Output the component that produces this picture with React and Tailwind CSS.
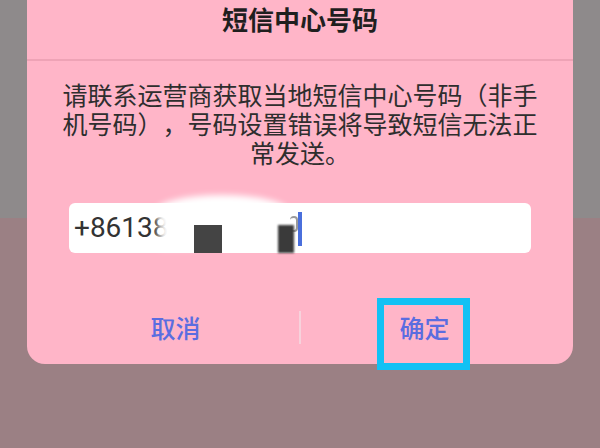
import React from "react";

const cjk = "font-['Noto_Sans_CJK_SC',sans-serif]";

const SmsCenterDialog = () => {
  return (
    <div className={`absolute left-[27px] top-0 w-[546px] h-[364px] rounded-b-[18px] bg-[#ffb5c8] flex flex-col ${cjk}`}>
      <div className="h-[61px] border-b-2 border-[#eea3b6] flex justify-center">
        <h1 className="pt-[2px] text-[26px] leading-[34px] font-semibold text-[#1f1f1f]">
          短信中心号码
        </h1>
      </div>

      <p className="pt-[19px] text-center text-[25px] leading-[29px] text-[#2e2e2e] [text-spacing-trim:space-all]">
        请联系运营商获取当地短信中心号码（非手
        <br />
        机号码），号码设置错误将导致短信无法正
        <br />
        常发送。
      </p>

      <div className="relative mt-[36px] mx-[42px] h-[50px] rounded-[6px] bg-white flex items-center">
        <span className="pl-[5px] text-[28px] text-[#333] font-['Roboto',sans-serif]">
          +86138
        </span>
        {/* blurred redaction over the rest of the number */}
        <div className="absolute left-[86px] top-[-8px] w-[134px] h-[34px] rounded-[50%] bg-white blur-[3px]" />
        <div className="absolute left-[90px] top-[8px] w-[40px] h-[36px] bg-white blur-[4px]" />
        <div className="absolute left-[125px] top-[22px] w-[28px] h-[28px] bg-[#444]" />
        <div className="absolute left-[221px] top-[13px] w-[8px] h-[16px] rounded-full border-2 border-l-0 border-[#9a9a9a]" />
        <div className="absolute left-[209px] top-[22px] w-[16px] h-[28px] bg-[#3a3a3a] blur-[1px]" />
        <div className="absolute left-[229px] top-[9px] w-[4px] h-[34px] bg-[#4a6fdc]" />
      </div>

      <div className="mt-auto mb-[19px] px-[25px] h-[36px] flex items-center">
        <button className="flex-1 text-[25px] leading-[36px] font-medium text-[#5a6de0]">取消</button>
        <div className="w-[2px] h-[33px] bg-[#f7d2dc]" />
        <button className="flex-1 text-[25px] leading-[36px] font-medium text-[#5a6de0]">确定</button>
      </div>
    </div>
  );
};

const App = () => {
  return (
    <div className="relative w-[600px] h-[448px] overflow-hidden flex flex-col">
      <div className="h-[218px] bg-[#8e8a8b]" />
      <div className="flex-1 bg-[#9b8084]" />
      <SmsCenterDialog />
      <div className="absolute left-[377px] top-[298px] w-[93px] h-[72px] border-[7px] border-[#12c1f4]" />
    </div>
  );
};

export default App;
